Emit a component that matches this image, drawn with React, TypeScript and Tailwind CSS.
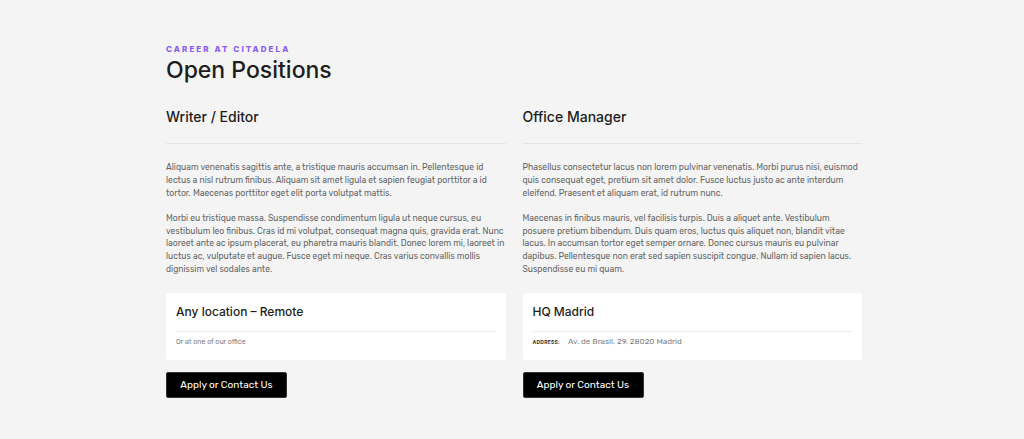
import React from "react";

const heading = { fontFamily: "Inter, 'Noto Sans', sans-serif" };
const body = { fontFamily: "Rubik, Roboto, 'Noto Sans', sans-serif" };

function Job(props: {
  title: string;
  paras: string[];
  card: React.ReactNode;
  cardTitle: string;
}) {
  return (
    <div className="flex flex-col">
      <h2 className="text-[14px] leading-[20px] font-medium text-[#1d1d1d] pt-[107px]" style={heading}>
        {props.title}
      </h2>
      <div className="h-px bg-[#e4e4e4] mt-[16px]" />
      <div className="mt-[17px] flex flex-col gap-[12.5px] text-[8.58px] leading-[12.8px] text-[#666] h-[132px]" style={body}>
        {props.paras.map((p, i) => (
          <p key={i}>{p}</p>
        ))}
      </div>
      <div className="bg-white rounded-[3px] h-[67px] px-[10px] pt-[11px]">
        <div className="text-[12px] leading-[16px] font-medium text-[#1d1d1d]" style={heading}>
          {props.cardTitle}
        </div>
        <div className="h-px bg-[#ececec] mt-[11px]" />
        <div className="mt-[5px] text-[7px] leading-[10px] text-[#808080] flex items-center" style={body}>
          {props.card}
        </div>
      </div>
      <button
        className="mt-[12px] w-[121px] h-[26px] bg-black text-white text-[10px] font-normal rounded-[2px] border border-[#333]"
        style={body}
      >
        Apply or Contact Us
      </button>
    </div>
  );
}

export default function App() {
  return (
    <div className="w-[1024px] h-[439px] bg-[#f4f4f4] overflow-hidden">
      <div className="relative w-[696px] ml-[166px]">
        <div className="absolute left-0 top-[44px]">
          <div
            className="text-[8px] leading-[10px] font-extrabold tracking-[0.26em] text-[#8b5cf6]"
            style={heading}
          >
            CAREER AT CITADELA
          </div>
          <h1 className="text-[23px] leading-[28px] font-medium text-[#1d1d1d] mt-[2px]" style={heading}>
            Open Positions
          </h1>
        </div>
        <div className="grid grid-cols-2 gap-[17px]">
          <Job
            title="Writer / Editor"
            paras={[
              "Aliquam venenatis sagittis ante, a tristique mauris accumsan in. Pellentesque id lectus a nisl rutrum finibus. Aliquam sit amet ligula et sapien feugiat porttitor a id tortor. Maecenas porttitor eget elit porta volutpat mattis.",
              "Morbi eu tristique massa. Suspendisse condimentum ligula ut neque cursus, eu vestibulum leo finibus. Cras id mi volutpat, consequat magna quis, gravida erat. Nunc laoreet ante ac ipsum placerat, eu pharetra mauris blandit. Donec lorem mi, laoreet in luctus ac, vulputate et augue. Fusce eget mi neque. Cras varius convallis mollis dignissim vel sodales ante.",
            ]}
            cardTitle="Any location – Remote"
            card={<span>Or at one of our office</span>}
          />
          <Job
            title="Office Manager"
            paras={[
              "Phasellus consectetur lacus non lorem pulvinar venenatis. Morbi purus nisi, euismod quis consequat eget, pretium sit amet dolor. Fusce luctus justo ac ante interdum eleifend. Praesent et aliquam erat, id rutrum nunc.",
              "Maecenas in finibus mauris, vel facilisis turpis. Duis a aliquet ante. Vestibulum posuere pretium bibendum. Duis quam eros, luctus quis aliquet non, blandit vitae lacus. In accumsan tortor eget semper ornare. Donec cursus mauris eu pulvinar dapibus. Pellentesque non erat sed sapien suscipit congue. Nullam id sapien lacus. Suspendisse eu mi quam.",
            ]}
            cardTitle="HQ Madrid"
            card={
              <>
                <span className="text-[5px] font-bold tracking-[0.05em] text-[#333] mr-[8px]" style={heading}>
                  ADDRESS:
                </span>
                <span className="text-[8px]">Av. de Brasil, 29, 28020 Madrid</span>
              </>
            }
          />
        </div>
      </div>
    </div>
  );
}
